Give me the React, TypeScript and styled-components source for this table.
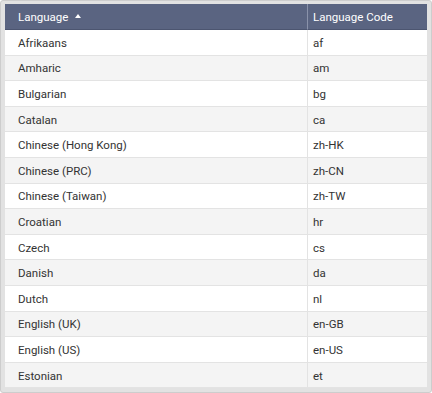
import React from 'react';
import styled, { createGlobalStyle } from 'styled-components';

const GlobalStyle = createGlobalStyle`
  html, body {
    margin: 0;
    padding: 0;
    background: #ffffff;
  }
  * {
    box-sizing: border-box;
  }
`;

const languages: [string, string][] = [
  ['Afrikaans', 'af'],
  ['Amharic', 'am'],
  ['Bulgarian', 'bg'],
  ['Catalan', 'ca'],
  ['Chinese (Hong Kong)', 'zh-HK'],
  ['Chinese (PRC)', 'zh-CN'],
  ['Chinese (Taiwan)', 'zh-TW'],
  ['Croatian', 'hr'],
  ['Czech', 'cs'],
  ['Danish', 'da'],
  ['Dutch', 'nl'],
  ['English (UK)', 'en-GB'],
  ['English (US)', 'en-US'],
  ['Estonian', 'et'],
];

const Frame = styled.div`
  width: 432px;
  height: 393px;
  padding: 3px 4px 4px 4px;
  background: #e2e2e2;
  border: 1px solid #cdcdcd;
  border-radius: 3px;
  overflow: hidden;
  font-family: Roboto, 'Liberation Sans', sans-serif;
  font-size: 11.5px;
`;

const Grid = styled.div`
  display: grid;
  grid-template-columns: 302px 120px;
  background: #ffffff;
`;

const HeaderCell = styled.div<{ $last?: boolean }>`
  display: flex;
  align-items: center;
  gap: 7px;
  height: 26px;
  padding-left: ${(p) => (p.$last ? '5px' : '13px')};
  padding-top: 1px;
  background: #5a6481;
  color: #ffffff;
  border-left: ${(p) => (p.$last ? '1px solid #8a92aa' : 'none')};
  border-bottom: 1px solid #4c5570;
`;

const SortCaret = styled.span`
  width: 0;
  height: 0;
  margin-top: -2px;
  border-left: 3.5px solid transparent;
  border-right: 3.5px solid transparent;
  border-bottom: 4px solid #ffffff;
`;

const Cell = styled.div<{ $alt: boolean; $last?: boolean }>`
  display: flex;
  align-items: center;
  height: 25.6px;
  padding-left: ${(p) => (p.$last ? '5px' : '13px')};
  padding-top: 1px;
  background: ${(p) => (p.$alt ? '#f4f4f4' : '#ffffff')};
  color: #333333;
  border-bottom: 1px solid #e3e3e3;
  border-left: ${(p) => (p.$last ? '1px solid #e3e3e3' : 'none')};
`;

export default function App() {
  return (
    <>
      <GlobalStyle />
      <Frame>
        <Grid>
          <HeaderCell>
            Language <SortCaret />
          </HeaderCell>
          <HeaderCell $last>Language Code</HeaderCell>
          {languages.map(([name, code], i) => (
            <React.Fragment key={code}>
              <Cell $alt={i % 2 === 1}>{name}</Cell>
              <Cell $alt={i % 2 === 1} $last>
                {code}
              </Cell>
            </React.Fragment>
          ))}
        </Grid>
      </Frame>
    </>
  );
}
